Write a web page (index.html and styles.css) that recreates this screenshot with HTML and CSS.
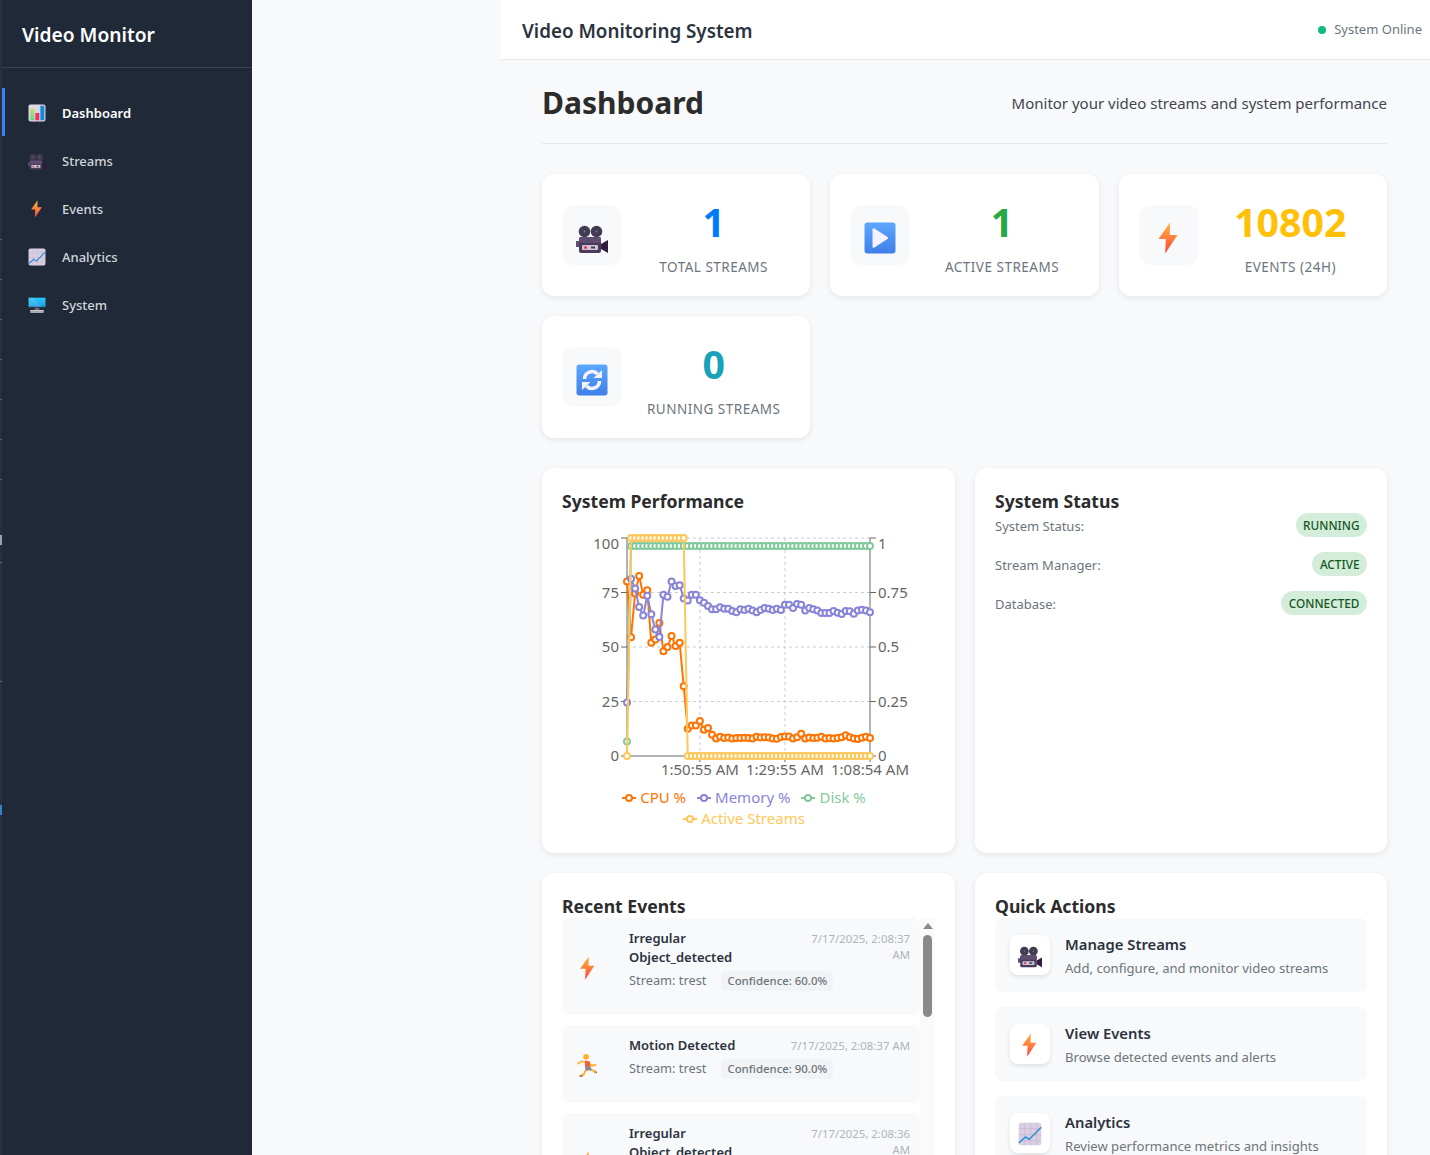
FILE: index.html
```html
<!DOCTYPE html>
<html lang="en">
<head>
<meta charset="utf-8">
<title>Video Monitor</title>
<link rel="stylesheet" href="styles.css">
</head>
<body>
<svg class="icon-defs" aria-hidden="true">
  <defs>
    <linearGradient id="zap" x1="0" y1="0" x2="0" y2="1"><stop offset="0" stop-color="#ffb23e"/><stop offset=".55" stop-color="#ff7a3c"/><stop offset="1" stop-color="#f8403a"/></linearGradient>
    <linearGradient id="tile" x1="0" y1="0" x2="0" y2="1"><stop offset="0" stop-color="#5ca8ff"/><stop offset="1" stop-color="#3f7fe8"/></linearGradient>
    <linearGradient id="greenbar" x1="0" y1="0" x2="0" y2="1"><stop offset="0" stop-color="#c3e26a"/><stop offset="1" stop-color="#5ed68c"/></linearGradient>
    <linearGradient id="screen" x1="0" y1="0" x2="0" y2="1"><stop offset="0" stop-color="#26c9fc"/><stop offset="1" stop-color="#1c9fe8"/></linearGradient>
    <symbol id="i-bars" viewBox="0 0 32 32">
      <rect x="1" y="1" width="30" height="30" rx="3" fill="#e1d8e6"/>
      <path d="M1 11h30M1 21h30M11 1v30M21 1v30" stroke="#cfc4d8" stroke-width="1"/>
      <rect x="4" y="8" width="7" height="21" fill="url(#greenbar)"/>
      <rect x="13" y="16" width="7" height="13" fill="#f92f60"/>
      <rect x="22" y="3" width="7" height="26" fill="#0f8ad8"/>
    </symbol>
    <symbol id="i-camera" viewBox="0 0 32 32">
      <circle cx="8.500" cy="9.500" r="5.800" fill="#433b52"/>
      <circle cx="20.500" cy="9.500" r="5.800" fill="#433b52"/>
      <circle cx="8.500" cy="9.500" r="1" fill="#7d7290"/>
      <circle cx="20.500" cy="9.500" r="1" fill="#7d7290"/>
      <rect x="0" y="19" width="4" height="6" fill="#5c5170"/>
      <rect x="3" y="15" width="22" height="16" rx="2" fill="#4a3a5c"/>
      <rect x="3" y="15" width="22" height="6" rx="2" fill="#5e4d70"/>
      <rect x="6" y="23" width="16" height="5" rx="1" fill="#cdc4d6"/>
      <circle cx="9.500" cy="25.500" r="1.500" fill="#f92f60"/>
      <rect x="15" y="24.500" width="4" height="2" fill="#433b52"/>
      <path d="M25 22l7-4v13l-7-4z" fill="#321b41"/>
    </symbol>
    <symbol id="i-zap" viewBox="0 0 32 32">
      <path d="M17 .5L5.500 17h7.300l-.6 14.500L24.500 13h-7.700z" fill="url(#zap)"/>
    </symbol>
    <symbol id="i-trend" viewBox="0 0 32 32">
      <rect x="1" y="1" width="30" height="30" rx="3" fill="#dacfe2"/>
      <path d="M1 9h30M1 17h30M1 25h30M9 1v30M17 1v30M25 1v30" stroke="#c5b8d0" stroke-width="1"/>
      <path d="M1 28l9-8 5 3L31 7" fill="none" stroke="#2e8fdb" stroke-width="2"/>
    </symbol>
    <symbol id="i-desktop" viewBox="0 0 32 32">
      <rect x="12" y="20" width="8" height="6" fill="#6b6b72"/>
      <rect x="4" y="25" width="24" height="5" rx="1" fill="#a9a6ad"/>
      <rect x="4" y="25" width="24" height="1.500" fill="#d3d3d3"/>
      <rect x="1" y="3" width="30" height="18" rx="1" fill="#2f3b4a"/>
      <path d="M1 3h30v16H1z" fill="url(#screen)"/>
      <path d="M1 3h9l14 16H1z" fill="#fff" opacity=".12"/>
    </symbol>
    <symbol id="i-play" viewBox="0 0 32 32">
      <rect x="0.500" y="0.500" width="31" height="31" rx="3" fill="url(#tile)"/>
      <path d="M8.500 7.500c0-1 1-1.600 1.900-1l13.100 8.500c.7.500.7 1.500 0 2l-13.100 8.500c-.9.600-1.900 0-1.900-1z" fill="#f6f0ff"/>
    </symbol>
    <symbol id="i-refresh" viewBox="0 0 32 32">
      <rect x="0.500" y="0.500" width="31" height="31" rx="3" fill="url(#tile)"/>
      <path d="M8.500 15a7.500 7.500 0 0 1 13-5" fill="none" stroke="#f6f0ff" stroke-width="3.600"/>
      <path d="M17.500 14h8.500V6z" fill="#f6f0ff"/>
      <path d="M23.500 17a7.500 7.500 0 0 1-13 5" fill="none" stroke="#f6f0ff" stroke-width="3.600"/>
      <path d="M14.500 18H6v8z" fill="#f6f0ff"/>
    </symbol>
    <symbol id="i-run" viewBox="0 0 32 32">
      <path d="M15 13L8 11 3 14M17 12l3 5 6-1" fill="none" stroke="#ffb02e" stroke-width="2.400" stroke-linecap="round" stroke-linejoin="round"/>
      <path d="M13 23l-3 6-4 1M19 22l5 2 1 2" fill="none" stroke="#ffb02e" stroke-width="2.600" stroke-linecap="round" stroke-linejoin="round"/>
      <circle cx="13.500" cy="5" r="3.800" fill="#ffb02e"/>
      <path d="M12 10l6 1 1 7-7 1z" fill="#f4603a"/>
      <path d="M12 18l7-.5 2 5-8 1z" fill="#8a8398"/>
      <path d="M3 31l5-1 1 1.500zM26 23l2 3-1 1-1-1.500z" fill="#433b72"/>
    </symbol>
    <symbol id="lg-mark" viewBox="0 0 14 14"><path d="M0 7h14" stroke="currentColor" stroke-width="2"/><circle cx="7" cy="7" r="3" fill="#fff" stroke="currentColor" stroke-width="2"/></symbol>
  </defs>
</svg>

<div class="edge"></div>
<aside class="sidebar">
  <div class="brand">Video Monitor</div>
  <nav class="nav">
    <a class="nav-item is-active"><svg class="nav-icon"><use href="#i-bars"/></svg>Dashboard</a>
    <a class="nav-item"><svg class="nav-icon"><use href="#i-camera"/></svg>Streams</a>
    <a class="nav-item"><svg class="nav-icon"><use href="#i-zap"/></svg>Events</a>
    <a class="nav-item"><svg class="nav-icon"><use href="#i-trend"/></svg>Analytics</a>
    <a class="nav-item"><svg class="nav-icon"><use href="#i-desktop"/></svg>System</a>
  </nav>
</aside>

<main class="main">
  <header class="topbar">
    <h1 class="topbar-title">Video Monitoring System</h1>
    <div class="online"><span class="online-dot"></span>System Online</div>
  </header>

  <div class="content">
    <div class="page-head">
      <h2 class="page-title">Dashboard</h2>
      <p class="page-sub">Monitor your video streams and system performance</p>
    </div>

    <section class="stats">
      <div class="stat card">
        <div class="stat-icon"><svg class="icon-32"><use href="#i-camera"/></svg></div>
        <div class="stat-body"><div class="stat-num num-blue">1</div><div class="stat-label">Total Streams</div></div>
      </div>
      <div class="stat card">
        <div class="stat-icon"><svg class="icon-32"><use href="#i-play"/></svg></div>
        <div class="stat-body"><div class="stat-num num-green">1</div><div class="stat-label">Active Streams</div></div>
      </div>
      <div class="stat card">
        <div class="stat-icon"><svg class="icon-32"><use href="#i-zap"/></svg></div>
        <div class="stat-body"><div class="stat-num num-yellow">10802</div><div class="stat-label">Events (24h)</div></div>
      </div>
      <div class="stat card">
        <div class="stat-icon"><svg class="icon-32"><use href="#i-refresh"/></svg></div>
        <div class="stat-body"><div class="stat-num num-teal">0</div><div class="stat-label">Running Streams</div></div>
      </div>
    </section>

    <section class="panels">
      <div class="panel card panel-tall">
        <h3 class="panel-title">System Performance</h3>
        <svg id="perf-chart" class="chart" width="373" height="248" viewBox="0 0 373 248"></svg>
        <div class="legend">
          <span class="legend-item lg-cpu"><svg class="legend-mark"><use href="#lg-mark"/></svg>CPU %</span>
          <span class="legend-item lg-mem"><svg class="legend-mark"><use href="#lg-mark"/></svg>Memory %</span>
          <span class="legend-item lg-disk"><svg class="legend-mark"><use href="#lg-mark"/></svg>Disk %</span>
          <span class="legend-item lg-act"><svg class="legend-mark"><use href="#lg-mark"/></svg>Active Streams</span>
        </div>
      </div>

      <div class="panel card panel-tall">
        <h3 class="panel-title">System Status</h3>
        <div class="status-list">
          <div class="status-row"><span class="status-name">System Status:</span><span class="badge">RUNNING</span></div>
          <div class="status-row"><span class="status-name">Stream Manager:</span><span class="badge">ACTIVE</span></div>
          <div class="status-row"><span class="status-name">Database:</span><span class="badge">CONNECTED</span></div>
        </div>
      </div>

      <div class="panel card">
        <h3 class="panel-title">Recent Events</h3>
        <div class="events-wrap">
          <div class="events">
            <article class="event">
              <svg class="event-icon"><use href="#i-zap"/></svg>
              <div class="event-body">
                <div class="event-top"><div class="event-title">Irregular Object_detected</div><div class="event-time">7/17/2025, 2:08:37 AM</div></div>
                <div class="event-meta"><span>Stream: trest</span><span class="conf">Confidence: 60.0%</span></div>
              </div>
            </article>
            <article class="event">
              <svg class="event-icon"><use href="#i-run"/></svg>
              <div class="event-body">
                <div class="event-top"><div class="event-title nowrap">Motion Detected</div><div class="event-time">7/17/2025, 2:08:37 AM</div></div>
                <div class="event-meta"><span>Stream: trest</span><span class="conf">Confidence: 90.0%</span></div>
              </div>
            </article>
            <article class="event">
              <svg class="event-icon"><use href="#i-zap"/></svg>
              <div class="event-body">
                <div class="event-top"><div class="event-title">Irregular Object_detected</div><div class="event-time">7/17/2025, 2:08:36 AM</div></div>
                <div class="event-meta"><span>Stream: trest</span><span class="conf">Confidence: 60.0%</span></div>
              </div>
            </article>
          </div>
          <div class="scrollbar"><span class="scroll-up"></span><span class="scroll-thumb"></span></div>
        </div>
      </div>

      <div class="panel card">
        <h3 class="panel-title">Quick Actions</h3>
        <div class="actions">
          <a class="action">
            <span class="action-icon"><svg class="icon-24"><use href="#i-camera"/></svg></span>
            <span class="action-text"><strong class="action-title">Manage Streams</strong><span class="action-desc">Add, configure, and monitor video streams</span></span>
          </a>
          <a class="action">
            <span class="action-icon"><svg class="icon-24"><use href="#i-zap"/></svg></span>
            <span class="action-text"><strong class="action-title">View Events</strong><span class="action-desc">Browse detected events and alerts</span></span>
          </a>
          <a class="action">
            <span class="action-icon"><svg class="icon-24"><use href="#i-trend"/></svg></span>
            <span class="action-text"><strong class="action-title">Analytics</strong><span class="action-desc">Review performance metrics and insights</span></span>
          </a>
        </div>
      </div>
    </section>
  </div>
</main>
<script src="chart.js"></script>
</body>
</html>
```
FILE: styles.css
```css
* { box-sizing: border-box; margin: 0; padding: 0; }
html, body { height: 1155px; overflow: hidden; }
body {
  display: flex;
  background: #f8f9fa;
  color: #212529;
  font-family: "Noto Sans", "Open Sans", sans-serif;
  font-size: 13px;
  line-height: 1.4;
}
.icon-defs { width: 0; height: 0; position: absolute; }

/* left edge */
.edge {
  flex: none;
  width: 2px;
  height: 1155px;
  background:
    linear-gradient(#9aa0a8, #9aa0a8) 0 535px / 2px 10px no-repeat,
    linear-gradient(#3b82c4, #3b82c4) 0 805px / 2px 10px no-repeat,
    linear-gradient(#6a7078, #6a7078) 0 562px / 2px 1px no-repeat,
    linear-gradient(#6a7078, #6a7078) 0 681px / 2px 1px no-repeat,
    repeating-linear-gradient(#2a3038 0 39px, #5a6068 39px 40px) 0 200px / 2px 285px no-repeat,
    #2a2f38;
}

/* sidebar */
.sidebar { flex: none; width: 250px; height: 1155px; background: #1f2937; color: #fff; }
.brand {
  height: 68px;
  padding: 0 20px;
  border-bottom: 1px solid rgba(255, 255, 255, .12);
  font-size: 19.2px;
  font-weight: 600;
  line-height: 69px;
}
.nav { padding-top: 20px; }
.nav-item {
  display: flex;
  align-items: center;
  gap: 16px;
  height: 48px;
  padding: 2px 0 0 26px;
  color: #d1d5db;
  font-weight: 500;
}
.nav-item.is-active { padding-left: 23px; border-left: 3px solid #3b82f6; color: #fff; font-weight: 600; }
.nav-icon { width: 18px; height: 18px; flex: none; }

/* main */
.main { flex: none; width: 929px; margin-left: 249px; background: #f8f9fa; min-height: 1155px; }
.topbar {
  display: flex;
  align-items: center;
  justify-content: space-between;
  height: 60px;
  padding: 0 8px 0 21px;
  background: #fff;
  border-bottom: 1px solid #e5e7eb;
}
.topbar-title { margin-top: 4px; font-size: 18.8px; font-weight: 600; color: #2b3340; }
.online { display: flex; align-items: center; gap: 8px; color: #6c757d; }
.online-dot { width: 8px; height: 8px; border-radius: 50%; background: #10b981; }
.content { padding: 20px 43px 0 41px; }
.page-head {
  display: flex;
  align-items: center;
  justify-content: space-between;
  padding-bottom: 17px;
  margin-bottom: 30px;
  border-bottom: 1px solid #e5e7eb;
}
.page-title { font-size: 30px; font-weight: 700; color: #2c2c2c; line-height: 46px; }
.page-sub { font-size: 15px; color: #3f4650; }

.card { background: #fff; border-radius: 12px; box-shadow: 0 2px 6px rgba(0, 0, 0, .08); }

.stats { display: grid; grid-template-columns: repeat(3, 1fr); gap: 20px; margin-bottom: 30px; }
.stat { display: flex; align-items: center; height: 122px; padding: 16px 20px; gap: 15px; }
.stat-icon {
  display: flex;
  align-items: center;
  justify-content: center;
  flex: none;
  width: 60px;
  height: 60px;
  border-radius: 12px;
  background: #f8f9fa;
}
.icon-32 { width: 32px; height: 32px; margin-top: 5px; }
.icon-24 { width: 24px; height: 24px; margin-top: 1px; }
.stat-body { flex: 1; text-align: center; }
.stat-num { font-size: 39.3px; font-weight: 700; line-height: 64px; }
.num-blue { color: #007bff; }
.num-green { color: #28a745; }
.num-yellow { color: #ffc107; }
.num-teal { color: #17a2b8; }
.stat-label { color: #6c757d; font-size: 13.5px; letter-spacing: .5px; text-transform: uppercase; line-height: 26px; }

.panels { display: grid; grid-template-columns: 1fr 1fr; gap: 20px; }
.panel { padding: 20px; }
.panel-tall { height: 385px; }
.panel-title { margin-bottom: -2px; font-size: 17.6px; font-weight: 700; line-height: 27px; color: #2c2c2c; }
.chart { display: block; margin-top: 20px; font-family: "Noto Sans", sans-serif; font-size: 15px; }
.chart-tick { fill: #666; }
.legend {
  display: flex;
  flex-wrap: wrap;
  justify-content: center;
  gap: 0 11px;
  width: 270px;
  margin: 6px 0 0 47px;
  font-size: 15px;
  line-height: 21px;
}
.legend-item { display: inline-flex; align-items: center; gap: 4px; }
.legend-mark { width: 14px; height: 14px; }
.lg-cpu { color: #ff7300; }
.lg-mem { color: #8884d8; }
.lg-disk { color: #82ca9d; }
.lg-act { color: #ffc658; }

.status-list { display: flex; flex-direction: column; gap: 15px; }
.status-row { display: flex; align-items: center; justify-content: space-between; height: 24px; color: #6c757d; }
.status-name { margin-top: 2px; }
.badge { padding: 0 7.5px; border-radius: 12px; background: #d4edda; color: #155724; font-size: 11.8px; font-weight: 500; line-height: 24px; }

.events-wrap { display: flex; height: 400px; margin-right: -15px; }
.events { width: 358px; display: flex; flex-direction: column; gap: 10px; }
.event {
  display: flex;
  align-items: center;
  padding: 11px 10px 24px 14px;
  border-radius: 8px;
  background: #f8f9fa;
}
.event-icon { flex: none; width: 24px; height: 24px; margin: 15px 29px 0 0; }
.event-body { flex: 1; min-width: 0; }
.event-top { display: flex; justify-content: space-between; gap: 20px; }
.event-title { font-weight: 600; line-height: 19px; color: #2b3340; }
.nowrap { white-space: nowrap; }
.event-time { margin-top: 2px; font-size: 11.4px; line-height: 16px; text-align: right; color: #adb5bd; }
.event-meta { display: flex; align-items: center; gap: 15px; margin-top: 4px; color: #6c757d; font-size: 12.8px; }
.conf { padding: 0 6px; border-radius: 4px; background: #f1f3f5; font-size: 11.4px; font-weight: 500; line-height: 20px; }
.scrollbar { display: flex; flex-direction: column; align-items: center; width: 15px; background: #fafafa; padding-top: 5px; }
.scroll-up { width: 0; height: 0; border: 5px solid transparent; border-top: 0; border-bottom: 6px solid #8a8a8a; }
.scroll-thumb { width: 9px; height: 82px; margin-top: 6px; border-radius: 5px; background: #8a8a8a; }

.actions { display: flex; flex-direction: column; gap: 15px; }
.action { display: flex; align-items: center; gap: 15px; height: 74px; padding: 0 15px; border-radius: 8px; background: #f8f9fa; }
.action-icon {
  display: flex;
  align-items: center;
  justify-content: center;
  flex: none;
  width: 40px;
  height: 40px;
  border-radius: 8px;
  background: #fff;
  box-shadow: 0 2px 4px rgba(0, 0, 0, .1);
}
.action-text { display: flex; flex-direction: column; gap: 4px; margin-top: 2px; }
.action-title { font-size: 14.8px; font-weight: 600; color: #2b3340; }
.action-desc { font-size: 13.1px; color: #6c757d; }
```
FILE: chart.js
```js
(function () {
  var NS = 'http://www.w3.org/2000/svg';
  var svg = document.getElementById('perf-chart');
  var X0 = 65, X1 = 308, Y100 = 5, Y0 = 223;

  var cpu = [80,54.5,74.5,82.6,74,76,52,53.4,61,48,50,55,50.5,52,32,12.5,14,14,16,12,12.8,
    9.8,8,8.8,8.3,8.5,8,8.3,8.3,8.4,8.3,8,8.8,8.5,8.6,8.5,8,7.9,8.7,9,9,8,8.6,10.2,8,8.5,8.2,8.4,8.8,8,8.3,8,8.3,8.6,9.5,8.6,8,7.8,8.4,8.8,8.3];
  var mem = [24.5,81.3,76.8,68.3,64.4,73.5,65,58,54.6,74,73,80,78,78.3,72.3,71.3,74,74,71.5,70.3,68.8,
    67.3,67.3,68.2,67.6,67.6,66.5,65.9,67.3,67,67.6,66.7,65.9,67,67.9,67.6,67,67.6,67,69.4,69.4,67.9,69.7,69.4,66.7,67.9,67.3,66.7,65.6,65.6,65.6,66.5,65.7,65.1,66.5,66.4,65.3,66.8,67.1,66.8,65.9];
  var disk = [6.7], active = [0], i;
  for (i = 1; i <= 60; i++) { disk.push(96.3); active.push(i <= 14 ? 100 : 0); }

  function el(name, attrs, text) {
    var n = document.createElementNS(NS, name);
    Object.keys(attrs).forEach(function (k) { n.setAttribute(k, attrs[k]); });
    if (text) { n.textContent = text; }
    svg.appendChild(n);
    return n;
  }
  function px(idx) { return X0 + (X1 - X0) * idx / 60; }
  function py(v) { return Y0 - (Y0 - Y100) * v / 100; }
  function grid(a, b, c, d) {
    el('line', { x1: a, y1: b, x2: c, y2: d, stroke: '#ccc', 'stroke-dasharray': '3 3' });
  }
  function line(a, b, c, d) { el('line', { x1: a, y1: b, x2: c, y2: d, stroke: '#666' }); }

  [100, 75, 50, 25].forEach(function (v) { grid(X0, py(v), X1, py(v)); });
  [px(18), px(39)].forEach(function (x) { grid(x, Y100, x, Y0); });

  line(X0, Y100, X0, Y0);
  line(X0, Y0, X1, Y0);
  line(X1, Y100, X1, Y0);

  [[100, '100', 11], [75, '75', 5], [50, '50', 5], [25, '25', 5], [0, '0', 5]].forEach(function (t) {
    line(X0 - 6, py(t[0]), X0, py(t[0]));
    el('text', { x: X0 - 8, y: py(t[0]) + t[2], 'text-anchor': 'end', 'class': 'chart-tick' }, t[1]);
  });
  [[100, '1', 11], [75, '0.75', 5], [50, '0.5', 5], [25, '0.25', 5], [0, '0', 5]].forEach(function (t) {
    line(X1, py(t[0]), X1 + 6, py(t[0]));
    el('text', { x: X1 + 8, y: py(t[0]) + t[2], 'class': 'chart-tick' }, t[1]);
  });
  [[px(18), '1:50:55 AM'], [px(39), '1:29:55 AM'], [X1, '1:08:54 AM']].forEach(function (t) {
    line(t[0], Y0, t[0], Y0 + 6);
    el('text', { x: t[0], y: Y0 + 19, 'text-anchor': 'middle', 'class': 'chart-tick' }, t[1]);
  });

  [[cpu, '#ff7300'], [mem, '#8884d8'], [disk, '#82ca9d'], [active, '#ffc658']].forEach(function (s) {
    var pts = s[0].map(function (v, idx) { return px(idx) + ',' + py(v); }).join(' ');
    el('polyline', { points: pts, fill: 'none', stroke: s[1], 'stroke-width': 2 });
    s[0].forEach(function (v, idx) {
      el('circle', { cx: px(idx), cy: py(v), r: 3, fill: '#fff', stroke: s[1], 'stroke-width': 2 });
    });
  });
})();
```
